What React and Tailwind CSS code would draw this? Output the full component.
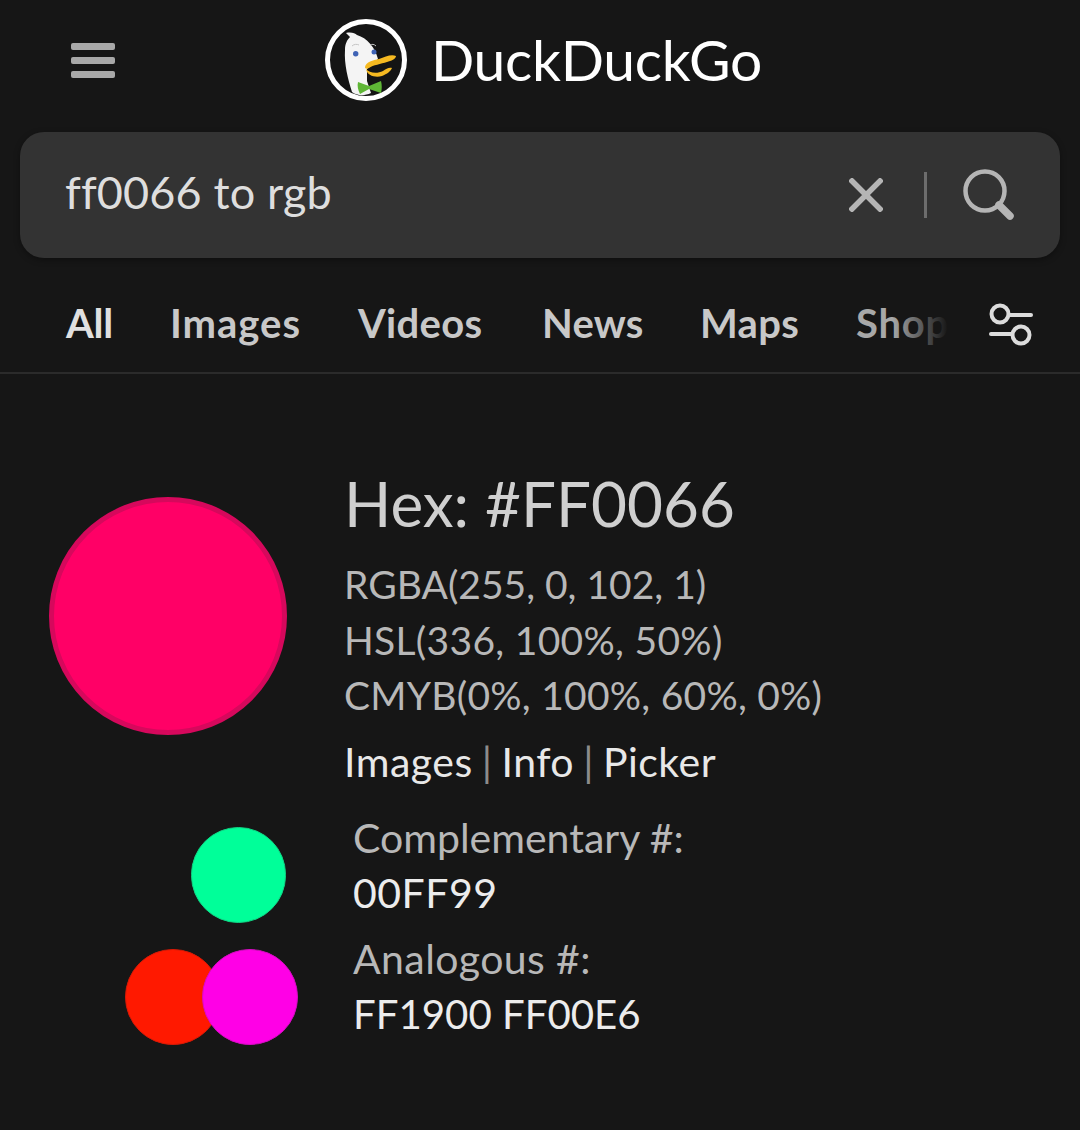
import { Fragment } from 'react';

const TABS = [
  { label: 'All', cls: 'text-[#e0e0e0] w-[104px] tracking-[-0.2px]' },
  { label: 'Images', cls: 'text-[#c8c8c8] w-[188px] tracking-[1px]' },
  { label: 'Videos', cls: 'text-[#c8c8c8] w-[184px] tracking-[0.3px]' },
  { label: 'News', cls: 'text-[#c8c8c8] w-[158px] tracking-[0.2px]' },
  { label: 'Maps', cls: 'text-[#c8c8c8] w-[156px] tracking-[0.3px]' },
];

function DuckLogo() {
  return (
    <svg viewBox="0 0 82 82" className="w-[82px] h-[82px] shrink-0">
      <circle cx="41" cy="41" r="38.5" fill="#141414" stroke="#fff" strokeWidth="5" />
      <path d="M21 14 C26 13 30 14 32 16 C42 19 50 28 53 40 L42 50 L42 62 L46 74 C40 77 32 77 27 73 C23 60 19 45 20 31 C20 25 22 21 25 18 Z" fill="#f4f4f4" />
      <circle cx="30.7" cy="34.7" r="2.7" fill="#3f63b5" />
      <circle cx="49" cy="33" r="2.5" fill="#3f63b5" />
      <path d="M27 27 C29 25 32 25 34 26 M45 26 C47 25 49 25 51 27" stroke="#c4c4c4" strokeWidth="1" fill="none" />
      <path d="M40 48 C41 43 48 41 54 40 C60 38 66 35 71 37 C71 40 66 42 62 43 C56 45 48 46 44 49 C42 50 40 50 40 48 Z" fill="#f5b921" />
      <path d="M41 50 C44 54 52 55 58 52 C61 50 64 48 67 49 C66 52 62 55 57 57 C51 59 42 57 41 50 Z" fill="#f5b921" />
      <path d="M33 63 L44 67 L56 62 C57 66 57 70 56 74 L44 70 L35 75 C33 71 32 67 33 63 Z" fill="#5fb636" />
    </svg>
  );
}

function Hamburger() {
  return (
    <div className="flex flex-col gap-[7px] w-[44px] shrink-0">
      <div className="h-[7px] rounded-[2px] bg-[#a8a8a8]" />
      <div className="h-[7px] rounded-[2px] bg-[#a8a8a8]" />
      <div className="h-[7px] rounded-[2px] bg-[#a8a8a8]" />
    </div>
  );
}

function ClearIcon() {
  return (
    <svg viewBox="0 0 34 34" className="w-[34px] h-[34px] shrink-0">
      <path d="M3 3 L31 31 M31 3 L3 31" stroke="#b5b5b5" strokeWidth="5.5" strokeLinecap="square" fill="none" />
    </svg>
  );
}

function SearchIcon() {
  return (
    <svg viewBox="0 0 52 52" className="w-[52px] h-[52px] shrink-0">
      <circle cx="22" cy="22" r="19.5" fill="none" stroke="#b5b5b5" strokeWidth="4.5" />
      <path d="M36 36 L47 47" stroke="#b5b5b5" strokeWidth="7.5" strokeLinecap="round" />
    </svg>
  );
}

function FiltersIcon() {
  return (
    <svg viewBox="0 0 44 44" className="w-[44px] h-[44px] shrink-0 mt-[4px]">
      <circle cx="11" cy="11" r="8.5" fill="none" stroke="#dcdcdc" strokeWidth="4" />
      <path d="M20 12 H42" stroke="#dcdcdc" strokeWidth="4" strokeLinecap="round" />
      <circle cx="32" cy="32" r="8.5" fill="none" stroke="#dcdcdc" strokeWidth="4" />
      <path d="M2 31 H23" stroke="#dcdcdc" strokeWidth="4" strokeLinecap="round" />
    </svg>
  );
}

export default function App() {
  return (
    <div
      className="w-[1080px] h-[1130px] overflow-hidden bg-[#161616]"
      style={{ fontFamily: 'Lato, "Noto Sans", sans-serif' }}
    >
      {/* header */}
      <header className="h-[132px] pt-[19px] pl-[71px] flex items-start">
        <div className="pt-[24px] w-[254px]">
          <Hamburger />
        </div>
        <DuckLogo />
        <span className="ml-[24px] mt-[7px] text-[57px] leading-[66px] tracking-[-0.3px] text-white">
          DuckDuckGo
        </span>
      </header>

      {/* search box */}
      <div className="mx-[20px] h-[126px] rounded-[24px] bg-[#333333] shadow-[0_2px_6px_rgba(0,0,0,0.35)] pl-[45px] pr-[45px] flex items-center">
        <span className="flex-1 text-[45px] tracking-[0.15px] text-[#dedede] -mt-[4px]">ff0066 to rgb</span>
        <ClearIcon />
        <div className="w-[3px] h-[46px] bg-[#6d6d6d] ml-[41px] mr-[36px]" />
        <SearchIcon />
      </div>

      {/* tabs */}
      <nav className="h-[116px] border-b-2 border-[#2b2b2b] pt-[16px] pl-[66px] pr-[47px] flex items-center">
        {TABS.map((t) => (
          <span key={t.label} className={`text-[40px] font-bold shrink-0 ${t.cls}`}>
            {t.label}
          </span>
        ))}
        <div className="flex-1 relative h-[48px] overflow-hidden">
          <span className="text-[40px] leading-[48px] tracking-[0.8px] font-bold text-[#a8a8a8] block">Shop</span>
          <div className="absolute inset-y-0 left-[36px] w-[56px] bg-gradient-to-r from-transparent to-[#161616]" />
        </div>
        <FiltersIcon />
      </nav>

      {/* color answer */}
      <main className="pt-[92px] flex">
        <div className="w-[344px] shrink-0 pl-[49px] pt-[31px]">
          <div className="w-[238px] h-[238px] rounded-full bg-[#ff0066] border-[5px] border-[#d6085c]" />
          <div className="mt-[92px] ml-[142px] w-[95px] h-[96px] rounded-full bg-[#00ff99] border border-[#10d585]" />
          <div className="mt-[26px] ml-[76px] flex">
            <div className="w-[96px] h-[96px] rounded-full bg-[#ff1900] border border-[#d81a06]" />
            <div className="-ml-[19px] relative w-[96px] h-[96px] rounded-full bg-[#ff00e6] border border-[#d60cc2]" />
          </div>
        </div>

        <div>
          <div className="text-[62px] leading-[72px] text-[#cfcfcf] mt-[1px]">Hex: #FF0066</div>
          <div className="mt-[18px] text-[39px] leading-[55.5px] text-[#b8b8b8]">
            <div>RGBA(255, 0, 102, 1)</div>
            <div className="tracking-[0.3px]">HSL(336, 100%, 50%)</div>
            <div className="tracking-[0.25px]">CMYB(0%, 100%, 60%, 0%)</div>
          </div>
          <div className="mt-[10px] text-[41px] leading-[56px] tracking-[0.5px] text-[#e8e8e8]">
            {['Images', 'Info', 'Picker'].map((l, i) => (
              <Fragment key={l}>
                {i > 0 && <span className="text-[#8c8c8c] mx-[9px]">|</span>}
                {l}
              </Fragment>
            ))}
          </div>
          <div className="ml-[9px] mt-[20px] text-[41px] leading-[55px]">
            <div className="text-[#b8b8b8]">Complementary #:</div>
            <div className="text-[#ececec] tracking-[0.5px]">00FF99</div>
            <div className="text-[#b8b8b8] tracking-[0.4px] mt-[11px]">Analogous #:</div>
            <div className="text-[#ececec] text-[40.2px]">FF1900 FF00E6</div>
          </div>
        </div>
      </main>
    </div>
  );
}
